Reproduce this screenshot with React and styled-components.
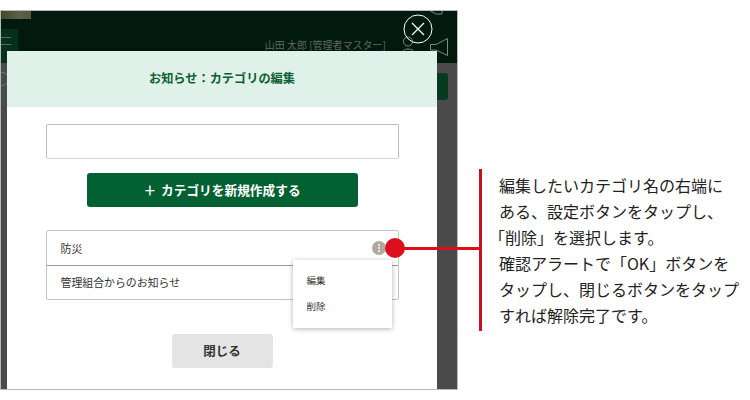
import React from 'react';
import styled, { createGlobalStyle } from 'styled-components';

const GlobalStyle = createGlobalStyle`
  html, body {
    margin: 0;
    padding: 0;
    background: #fff;
    width: 750px;
    height: 400px;
    overflow: hidden;
  }
  * { box-sizing: border-box; }
  body {
    font-family: "Noto Sans CJK JP", "Noto Sans", sans-serif;
  }
`

const Page = styled.div`
  width: 750px;
  height: 400px;
  padding-top: 10px;
  display: flex;
  position: relative;
`
const Shot = styled.div`
  width: 458px;
  height: 380px;
  border: 1px solid #b9b9b9;
  position: relative;
  overflow: hidden;
  background: #4a4a4a;
`
const AppHeader = styled.div`
  height: 52px;
  background: #02190d;
  display: flex;
  align-items: flex-end;
  justify-content: flex-end;
  padding-right: 9px;
  position: relative;
`
const Photo = styled.div`
  position: absolute;
  left: 0;
  top: 0;
  width: 30px;
  height: 8px;
  background: linear-gradient(90deg, #3f4a2a, #5d6246 60%, #54583f);
`
const MenuTab = styled.div`
  position: absolute;
  left: 0;
  top: 18px;
  width: 17px;
  height: 34px;
  background: #04301a;
  display: flex;
  flex-direction: column;
  gap: 6px;
  padding-top: 8px;
`
const MenuLine = styled.span`
  display: block;
  width: 10px;
  height: 1px;
  background: #55695c;
`
const UserName = styled.span`
  color: #5d6a62;
  font-size: 10px;
  line-height: 14px;
  margin-bottom: 11px;
  margin-right: 15px;
`
const UserIcon = styled.svg`
  margin-right: 13px;
  margin-bottom: 3px;
`
const HornIcon = styled.svg`
  margin-bottom: 7px;
`
const TopHorn = styled.svg`
  position: absolute;
  left: 427px;
  top: -1px;
`
const Strip = styled.div`
  position: absolute;
  right: 9px;
  top: 62px;
  width: 12px;
  height: 27px;
  background: #063a20;
  border-radius: 0 3px 3px 0;
`
const SideRing = styled.div`
  position: absolute;
  left: -6px;
  top: 61px;
  width: 14px;
  height: 14px;
  border: 1px solid #777;
  border-radius: 50%;
`
const CloseIcon = styled.svg`
  position: absolute;
  left: 402px;
  top: 3px;
  z-index: 3;
`
const Modal = styled.div`
  position: absolute;
  left: 6px;
  top: 40px;
  width: 430px;
  height: 340px;
  background: #fff;
  z-index: 2;
  display: flex;
  flex-direction: column;
  align-items: center;
`
const ModalHead = styled.div`
  width: 100%;
  height: 56px;
  padding-bottom: 3px;
  background: #e0f1e9;
  color: #0b5f33;
  font-size: 12.2px;
  font-weight: 700;
  display: flex;
  align-items: center;
  justify-content: center;
`
const NameInput = styled.div`
  width: 353px;
  height: 35px;
  margin-top: 17px;
  border: 1px solid #bdbdbd;
  border-bottom-color: #d8d8d8;
  border-radius: 2px;
`
const CreateButton = styled.div`
  width: 271px;
  height: 34px;
  margin-top: 14px;
  padding-bottom: 1px;
  background: #036033;
  border-radius: 3px;
  color: #fff;
  font-size: 12.7px;
  font-weight: 700;
  display: flex;
  align-items: center;
  justify-content: center;
  gap: 5px;
`
const CategoryList = styled.div`
  width: 353px;
  height: 70px;
  margin-top: 23px;
  border: 1px solid #c6c6c6;
  border-radius: 2px;
  display: flex;
  flex-direction: column;
  position: relative;
`
const CategoryRow = styled.div`
  flex: 1;
  display: flex;
  align-items: center;
  justify-content: space-between;
  padding: 0 13px 0 14px;
  font-size: 10.9px;
  color: #333;
  border-top: ${p => (p.$first ? 'none' : '1px solid #9c9c9c')};
`
const SettingDot = styled.span`
  width: 14px;
  height: 14px;
  margin-right: -1px;
  border-radius: 50%;
  background: #b1aa9c;
  display: flex;
  flex-direction: column;
  align-items: center;
  justify-content: center;
  gap: 1px;
`
const Pip = styled.i`
  width: 2px;
  height: 2px;
  border-radius: 50%;
  background: #fff;
`
const PopMenu = styled.div`
  position: absolute;
  left: 246px;
  top: 29px;
  width: 99px;
  height: 68px;
  padding: 0 0 1px 14px;
  background: #fff;
  box-shadow: 0 1px 5px rgba(0, 0, 0, 0.3);
  display: flex;
  flex-direction: column;
  justify-content: center;
  gap: 9px;
  z-index: 3;
`
const PopItem = styled.span`
  font-size: 9.5px;
  line-height: 17px;
  color: #333;
`
const CloseButton = styled.div`
  width: 101px;
  height: 34px;
  margin-top: 34px;
  padding-bottom: 1px;
  background: #e4e4e4;
  border-radius: 3px;
  color: #333;
  font-size: 12.5px;
  font-weight: 700;
  display: flex;
  align-items: center;
  justify-content: center;
`
const Connector = styled.div`
  position: absolute;
  left: 395px;
  top: 247px;
  width: 86px;
  height: 3px;
  background: #dc0f1e;
  z-index: 4;
`
const RedDot = styled.div`
  position: absolute;
  left: 385px;
  top: 238px;
  width: 20px;
  height: 20px;
  border-radius: 50%;
  background: #dc0f1e;
  z-index: 4;
`
const Note = styled.div`
  margin-left: 21px;
  margin-top: 159px;
  width: 268px;
  height: 162px;
  border-left: 3px solid #c8101f;
  padding: 3px 0 0 17px;
  font-size: 16px;
  line-height: 26px;
  color: #222;
  white-space: nowrap;
`
const NoteLine = styled.div`
  margin-left: ${p => (p.$hang ? '-10px' : '0')};
`

export default function App() {
  return (
    <Page>
      <GlobalStyle />
      <Shot>
        <AppHeader>
          <Photo />
          <MenuTab>
            <MenuLine />
            <MenuLine />
          </MenuTab>
          <TopHorn width="18" height="6" viewBox="0 0 18 6" fill="none" stroke="#7f8a82">
            <path d="M1 0l7 4h6V0" />
          </TopHorn>
          <UserName>山田 太郎 [管理者マスター]</UserName>
          <UserIcon width="16" height="24" viewBox="0 0 16 24" fill="none" stroke="#7f8a82">
            <circle cx="7" cy="5.5" r="4.5" />
            <path d="M1 20c0-5 2-7 6-7s7 2 8 7" />
          </UserIcon>
          <HornIcon width="18" height="18" viewBox="0 0 18 18" fill="none" stroke="#7f8a82">
            <path d="M.5 6.5H6L17.5.5v17L6 12H.5z" />
          </HornIcon>
        </AppHeader>
        <Strip />
        <SideRing />
        <CloseIcon width="30" height="30" viewBox="0 0 30 30" fill="none" stroke="#fff">
          <circle cx="15" cy="15" r="14" strokeWidth="1" />
          <path d="M9 9l12 12M21 9L9 21" strokeWidth="1.2" />
        </CloseIcon>
        <Modal>
          <ModalHead>お知らせ：カテゴリの編集</ModalHead>
          <NameInput />
          <CreateButton>
            <span>＋</span>
            <span>カテゴリを新規作成する</span>
          </CreateButton>
          <CategoryList>
            <CategoryRow $first>
              <span>防災</span>
              <SettingDot>
                <Pip />
                <Pip />
                <Pip />
              </SettingDot>
            </CategoryRow>
            <CategoryRow>
              <span>管理組合からのお知らせ</span>
            </CategoryRow>
            <PopMenu>
              <PopItem>編集</PopItem>
              <PopItem>削除</PopItem>
            </PopMenu>
          </CategoryList>
          <CloseButton>閉じる</CloseButton>
        </Modal>
      </Shot>
      <Connector />
      <RedDot />
      <Note>
        <NoteLine>編集したいカテゴリ名の右端に</NoteLine>
        <NoteLine>ある、設定ボタンをタップし、</NoteLine>
        <NoteLine $hang>「削除」を選択します。</NoteLine>
        <NoteLine>確認アラートで「OK」ボタンを</NoteLine>
        <NoteLine>タップし、閉じるボタンをタップ</NoteLine>
        <NoteLine>すれば解除完了です。</NoteLine>
      </Note>
    </Page>
  )
}
